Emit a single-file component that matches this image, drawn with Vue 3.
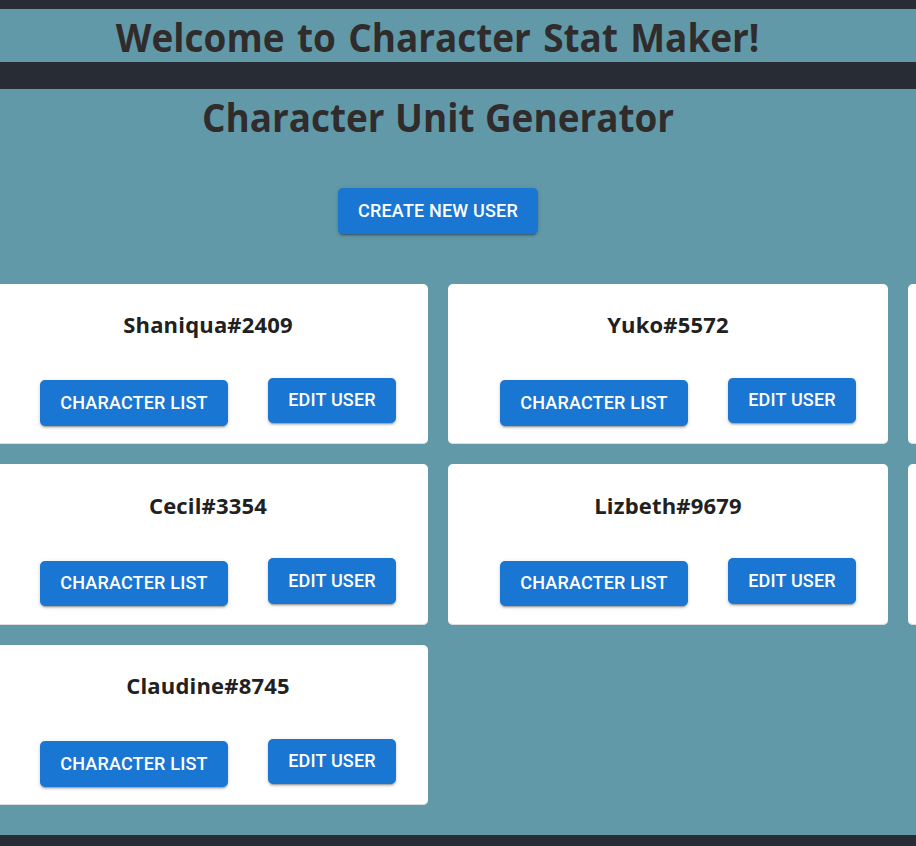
<script setup>
const users = [
  { name: 'Shaniqua#2409' },
  { name: 'Yuko#5572' },
  null,
  { name: 'Cecil#3354' },
  { name: 'Lizbeth#9679' },
  null,
  { name: 'Claudine#8745' },
]
</script>

<template>
  <div class="page">
    <header class="banner">
      <h1><span class="welcome">Welcome to Character Stat Maker!</span></h1>
    </header>
    <main class="content">
      <h1><span class="subtitle">Character Unit Generator</span></h1>
      <div class="create-row">
        <button class="btn create">CREATE NEW USER</button>
      </div>
      <section class="cards">
        <article v-for="(user, i) in users" :key="i" class="card">
          <template v-if="user">
            <h2>{{ user.name }}</h2>
            <div class="actions">
              <button class="btn list">CHARACTER LIST</button>
              <button class="btn edit">EDIT USER</button>
            </div>
          </template>
        </article>
      </section>
    </main>
  </div>
</template>

<style>
body {
  margin: 0;
  background: #282c34;
  overflow: hidden;
}
</style>

<style scoped>
.page {
  height: 846px;
  box-sizing: border-box;
  padding-top: 9px;
  overflow: hidden;
  background: #282c34;
  font-family: "Segoe UI", "Open Sans", "Noto Sans", sans-serif;
}
.banner {
  height: 53px;
  margin-bottom: 27px;
  background: #6199a9;
}
.content {
  height: 746px;
  overflow: hidden;
  background: #6199a9;
}
h1 {
  width: 876px;
  margin: 0;
  text-align: center;
  font-size: 40px;
  line-height: 56px;
  font-weight: 700;
  color: #302c2c;
  white-space: nowrap;
}
.welcome,
.subtitle {
  display: inline-block;
}
.welcome {
  word-spacing: 3px;
  transform: scaleX(0.923);
}
.subtitle {
  word-spacing: 1px;
  transform: scaleX(0.922);
}
.create-row {
  display: flex;
  justify-content: center;
  width: 876px;
  padding-top: 43px;
}
.btn {
  display: block;
  box-sizing: border-box;
  height: 45.5px;
  padding: 0;
  border: 0;
  border-radius: 5px;
  background: #1976d2;
  color: #fff;
  font-family: Roboto, sans-serif;
  font-size: 18px;
  font-weight: 500;
  letter-spacing: 0.18px;
  text-align: center;
  white-space: nowrap;
  box-shadow: 0 3px 1px -2px rgba(0, 0, 0, 0.2), 0 2px 2px 0 rgba(0, 0, 0, 0.14), 0 1px 5px 0 rgba(0, 0, 0, 0.12);
}
.create {
  width: 200px;
  height: 46px;
  line-height: 46px;
}
.cards {
  display: grid;
  grid-template-columns: repeat(3, 440px);
  grid-auto-rows: 160.4px;
  gap: 20px;
  margin: 50px 0 0 -12px;
}
.card {
  border-radius: 5px;
  background: #fff;
  box-shadow: inset 0 -1px 0 #dcdfe0;
}
h2 {
  margin: 0;
  padding-top: 24.3px;
  text-align: center;
  font-size: 22px;
  line-height: 32px;
  font-weight: 700;
  letter-spacing: 0.18px;
  color: #212121;
}
.actions {
  display: flex;
  gap: 40px;
  padding: 37.7px 0 0 52px;
}
.list {
  width: 188px;
  margin-top: 2.3px;
  line-height: 44px;
}
.edit {
  width: 128px;
  line-height: 44.9px;
}
</style>
